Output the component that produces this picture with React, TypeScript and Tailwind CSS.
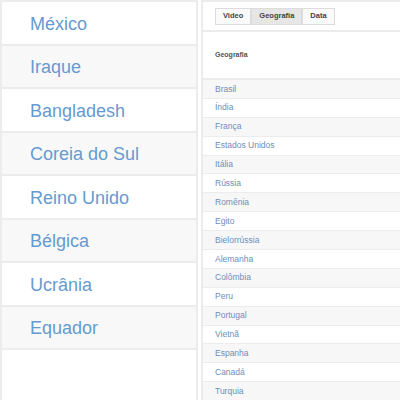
const LEFT = ["México", "Iraque", "Bangladesh", "Coreia do Sul", "Reino Unido", "Bélgica", "Ucrânia", "Equador"];

const RIGHT = [
  "Brasil", "Índia", "França", "Estados Unidos", "Itália", "Rússia", "Romênia", "Egito",
  "Bielorrússia", "Alemanha", "Colômbia", "Peru", "Portugal", "Vietnã", "Espanha", "Canadá", "Turquia",
];

const TABS = ["Video", "Geografia", "Data"];

export default function App() {
  return (
    <div className="flex h-[400px] w-[400px] overflow-hidden bg-white font-['Liberation_Sans',Arial,sans-serif]">
      {/* country list, big */}
      <div className="flex w-[198px] shrink-0 flex-col border-x-2 border-t-2 border-[#ececec]">
        {LEFT.map((name, i) => (
          <div
            key={name}
            className={`flex h-[43.5px] shrink-0 items-center border-b-2 border-[#ececec] pl-[28px] pt-[3px] text-[18px] text-[#669ad0] ${
              i % 2 ? "bg-[#f8f8f8]" : "bg-white"
            }`}
          >
            {name}
          </div>
        ))}
      </div>

      {/* detail table */}
      <div className="ml-[3px] flex flex-1 flex-col border-l-2 border-t-2 border-[#ececec]">
        <div className="flex h-[30px] shrink-0 items-center border-b-2 border-[#ececec] pl-[12px]">
          {TABS.map((t) => (
            <div
              key={t}
              className={`flex h-[17px] items-center border border-[#dcdcdc] px-[7px] text-[7.5px] font-semibold text-[#444] ${
                t === "Geografia" ? "bg-[#e6e6e6]" : "bg-[#fafafa]"
              }`}
            >
              {t}
            </div>
          ))}
        </div>
        <div className="flex h-[48px] shrink-0 items-center border-b-2 border-[#ececec] pl-[12px] text-[7px] font-bold text-[#555]">
          Geografia
        </div>
        {RIGHT.map((name, i) => (
          <div
            key={name}
            className={`flex h-[18.9px] shrink-0 items-center border-b border-[#ececec] pl-[12px] text-[8.5px] text-[#6b8fba] ${
              i % 2 ? "bg-white" : "bg-[#f7f7f7]"
            }`}
          >
            {name}
          </div>
        ))}
      </div>
    </div>
  );
}
